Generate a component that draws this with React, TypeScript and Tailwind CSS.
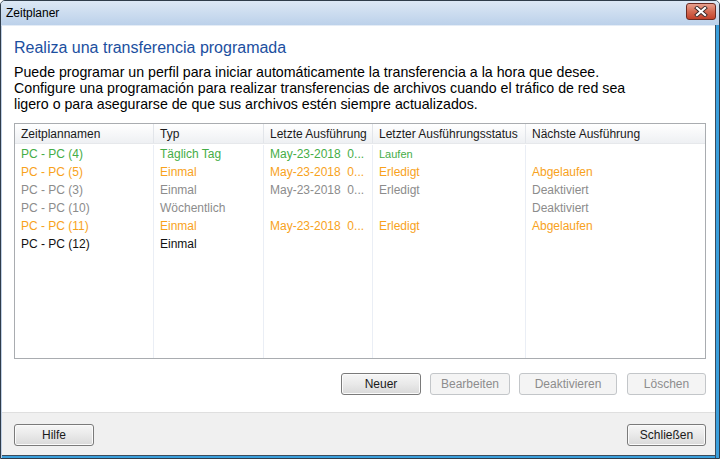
import React from "react";

const font = { fontFamily: '"Liberation Sans", Arial, sans-serif' };

type Row = {
  name: string;
  typ: string;
  last: string;
  status: string;
  next: string;
  color: string;
};

const rows: Row[] = [
  { name: "PC - PC (4)", typ: "Täglich Tag", last: "May-23-2018  0...", status: "Laufen", next: "", color: "text-[#45ad47]" },
  { name: "PC - PC (5)", typ: "Einmal", last: "May-23-2018  0...", status: "Erledigt", next: "Abgelaufen", color: "text-[#f8a21c]" },
  { name: "PC - PC (3)", typ: "Einmal", last: "May-23-2018  0...", status: "Erledigt", next: "Deaktiviert", color: "text-[#8c8c8c]" },
  { name: "PC - PC (10)", typ: "Wöchentlich", last: "", status: "", next: "Deaktiviert", color: "text-[#8c8c8c]" },
  { name: "PC - PC (11)", typ: "Einmal", last: "May-23-2018  0...", status: "Erledigt", next: "Abgelaufen", color: "text-[#f8a21c]" },
  { name: "PC - PC (12)", typ: "Einmal", last: "", status: "", next: "", color: "text-[#111111]" },
];

const cols = [
  { label: "Zeitplannamen", w: "w-[139px]" },
  { label: "Typ", w: "w-[110px]" },
  { label: "Letzte Ausführung", w: "w-[109px]" },
  { label: "Letzter Ausführungsstatus", w: "w-[153px]" },
  { label: "Nächste Ausführung", w: "flex-1" },
];

function Btn({ label, w, disabled }: { label: string; w: string; disabled?: boolean }) {
  return (
    <div
      className={
        "h-[22px] rounded-[3px] border flex items-center justify-center text-[12px] " +
        w +
        (disabled
          ? " border-[#c3c6c9] bg-[#f4f4f4] text-[#8d8d8d]"
          : " border-[#7a7a7a] bg-gradient-to-b from-[#f6f6f6] via-[#e9e9e9] to-[#d9d9d9] text-[#1a1a1a] shadow-[inset_0_0_0_1px_#fbfbfb]")
      }
    >
      {label}
    </div>
  );
}

export default function App() {
  return (
    <div style={font} className="w-[720px] h-[459px] flex flex-col border border-[#2f3c4a] rounded-t-[5px] bg-[#c9dbef] overflow-hidden">
      {/* title bar */}
      <div className="h-[24px] shrink-0 flex items-center justify-between pl-[5px] pr-[3px] bg-gradient-to-b from-[#dce8f5] to-[#bcd1ea]">
        <span className="text-[12px] text-black">Zeitplaner</span>
        <div className="w-[30px] h-[17px] rounded-[3px] border border-[#6b2a22] bg-gradient-to-b from-[#e7a08f] via-[#d46a52] to-[#c2412a] flex items-center justify-center mt-[-3px]">
          <svg width="14" height="11" viewBox="0 0 14 11">
            <path d="M3 2 L11 9 M11 2 L3 9" stroke="#3b2a2a" strokeWidth="4" strokeLinecap="square" />
            <path d="M3 2 L11 9 M11 2 L3 9" stroke="#ffffff" strokeWidth="2.2" strokeLinecap="square" />
          </svg>
        </div>
      </div>
      <div className="flex-1 flex min-h-0">
        <div className="flex-1 flex flex-col border-l border-[#bfd0e6] border-t border-t-[#e4ecf6]">
          {/* content */}
          <div className="flex-1 bg-white flex flex-col pl-[12px] pr-[9px] pt-[12px]">
            <div className="text-[16px] leading-[20px] text-[#1c4fa0]">Realiza una transferencia programada</div>
            <div className="mt-[6px] text-[14.2px] leading-[16px] text-black">
              <div>Puede programar un perfil para iniciar automáticamente la transferencia a la hora que desee.</div>
              <div>Configure una programación para realizar transferencias de archivos cuando el tráfico de red sea</div>
              <div>ligero o para asegurarse de que sus archivos estén siempre actualizados.</div>
            </div>
            {/* table */}
            <div className="mt-[11px] h-[236px] border border-[#a9acb0] flex flex-col relative">
              <div className="h-[20px] flex bg-gradient-to-b from-[#ffffff] to-[#eef0f3] border-b border-[#e6e8eb]">
                {cols.map((c, i) => (
                  <div
                    key={i}
                    className={"h-full flex items-center pl-[6px] text-[12px] text-[#1a1a1a] " + c.w + (i < 4 ? " border-r border-[#e2e5ea]" : "")}
                  >
                    {c.label}
                  </div>
                ))}
              </div>
              <div className="flex-1 flex pt-[1px]">
                <div className="w-[139px] border-r border-[#eaeef5] flex flex-col">
                  {rows.map((r, i) => (
                    <div key={i} className={"h-[18px] flex items-center pl-[6px] text-[12px] whitespace-pre " + r.color}>{r.name}</div>
                  ))}
                </div>
                <div className="w-[110px] border-r border-[#eaeef5] flex flex-col">
                  {rows.map((r, i) => (
                    <div key={i} className={"h-[18px] flex items-center pl-[6px] text-[12px] whitespace-pre " + r.color}>{r.typ}</div>
                  ))}
                </div>
                <div className="w-[109px] border-r border-[#eaeef5] flex flex-col">
                  {rows.map((r, i) => (
                    <div key={i} className={"h-[18px] flex items-center pl-[6px] text-[12px] whitespace-pre " + r.color}>{r.last}</div>
                  ))}
                </div>
                <div className="w-[153px] border-r border-[#eaeef5] flex flex-col">
                  {rows.map((r, i) => (
                    <div
                      key={i}
                      className={"h-[18px] flex items-center pl-[6px] whitespace-pre " + r.color + (r.status === "Laufen" ? " text-[11px]" : " text-[12px]")}
                    >
                      {r.status}
                    </div>
                  ))}
                </div>
                <div className="flex-1 flex flex-col">
                  {rows.map((r, i) => (
                    <div key={i} className={"h-[18px] flex items-center pl-[6px] text-[12px] whitespace-pre " + r.color}>{r.next}</div>
                  ))}
                </div>
              </div>
            </div>
            <div className="mt-[14px] flex justify-end">
              <Btn label="Neuer" w="w-[80px]" />
              <div className="w-[9px]" />
              <Btn label="Bearbeiten" w="w-[80px]" disabled />
              <div className="w-[9px]" />
              <Btn label="Deaktivieren" w="w-[98px]" disabled />
              <div className="w-[10px]" />
              <Btn label="Löschen" w="w-[79px]" disabled />
            </div>
          </div>
          {/* footer */}
          <div className="h-[43px] shrink-0 bg-[#f0f0f0] border-t border-[#dfdfdf] flex items-start justify-between pl-[12px] pr-[9px] pt-[11px]">
            <Btn label="Hilfe" w="w-[80px]" />
            <Btn label="Schließen" w="w-[79px]" />
          </div>
          <div className="h-[3px] shrink-0 border-t border-[#3c4c5c] bg-[#3a9fdc]" />
        </div>
        <div className="w-[4px] shrink-0 border-l border-[#3c4c5c] bg-[#3a9fdc]" />
      </div>
    </div>
  );
}
